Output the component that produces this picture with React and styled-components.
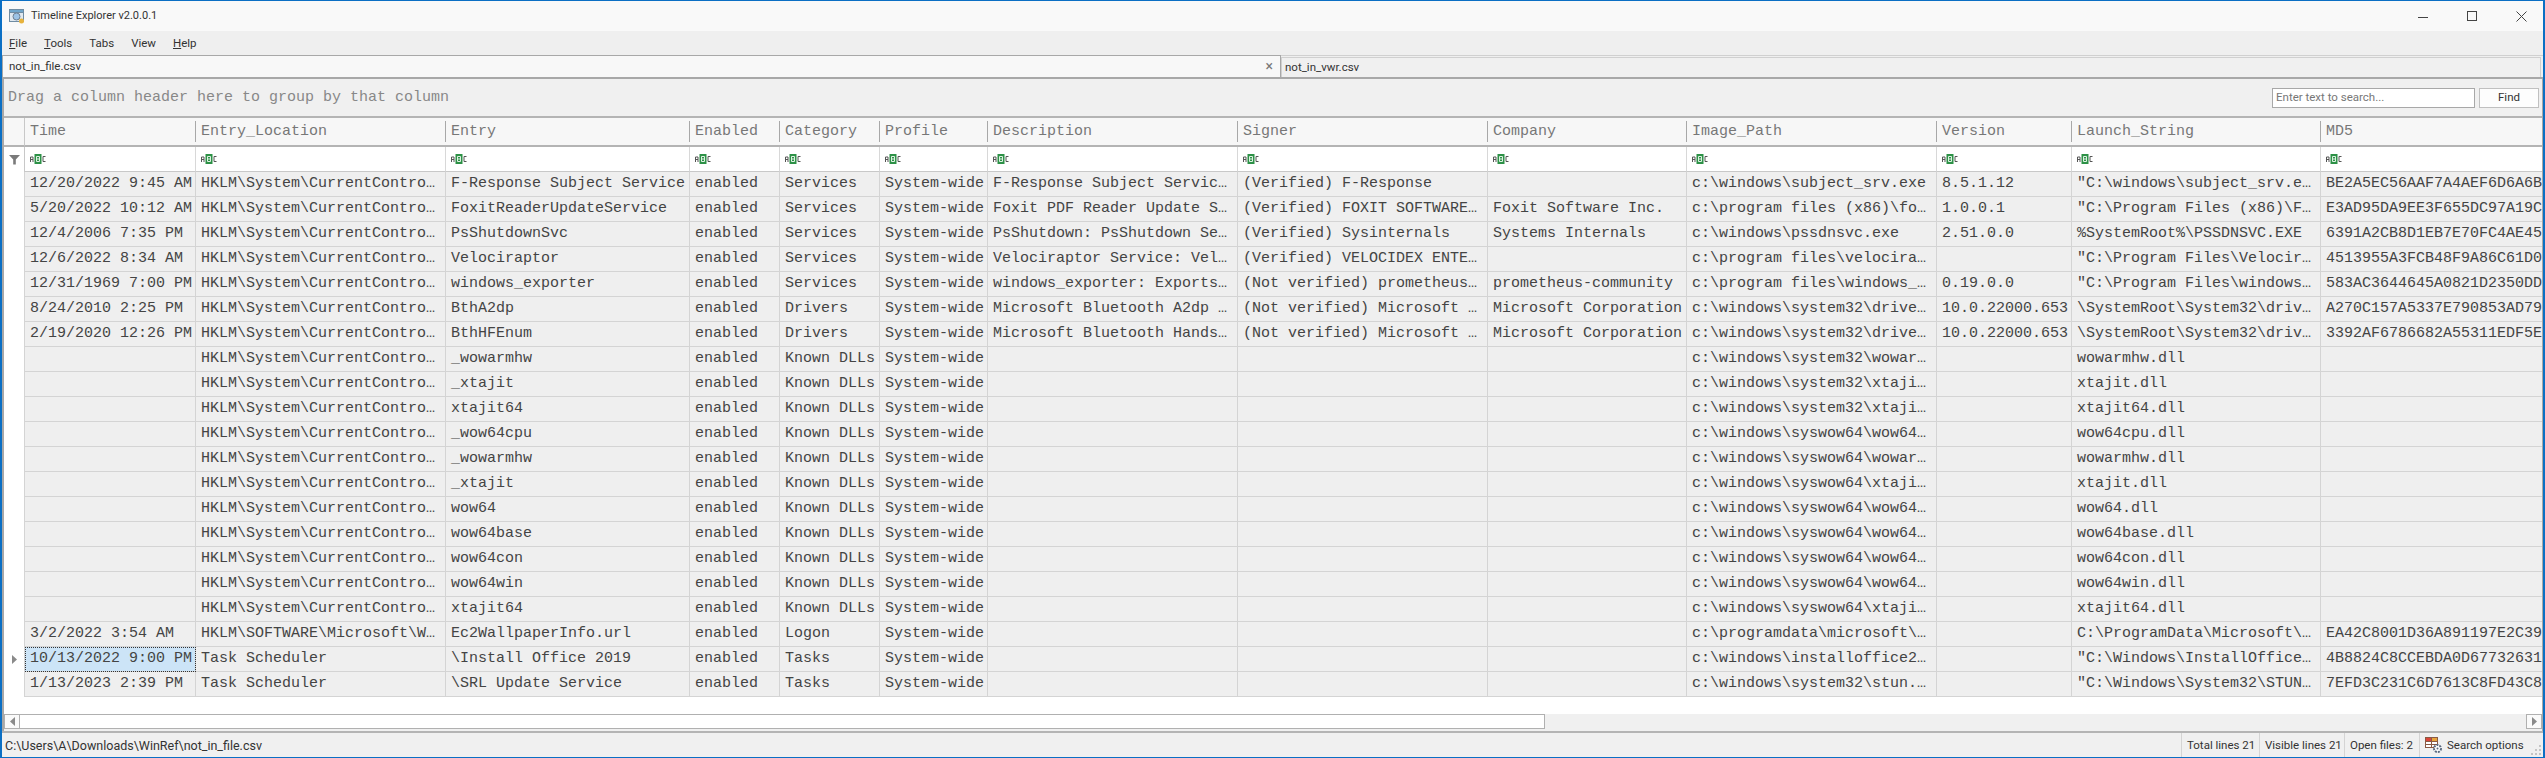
import React from "react";
import styled, { createGlobalStyle } from "styled-components";

const GlobalStyle = createGlobalStyle`
  html, body {
    margin: 0;
    padding: 0;
    background: #f0f0f0;
    overflow: hidden;
  }
  * {
    box-sizing: border-box;
  }
`;

const UI_FONT = `Roboto, "Open Sans", sans-serif`;
const MONO_FONT = `"Liberation Mono", "DejaVu Sans Mono", monospace`;

const Window = styled.div`
  width: 2545px;
  height: 758px;
  display: flex;
  flex-direction: column;
  background: #f0f0f0;
  border: 1px solid #0b6fc4;
  border-width: 1px 2px 1px 2px;
  overflow: hidden;
  font-family: ${UI_FONT};
`;

const TitleBar = styled.div`
  height: 30px;
  flex: none;
  display: flex;
  align-items: center;
  background: #f9f9f9;
  font-size: 11px;
  color: #333;
  gap: 6px;
  margin-left: -2px;
  padding-left: 9px;
`;

const TitleText = styled.div`
  flex: 1;
  transform: translateY(-1px);
`;

const WinControls = styled.div`
  display: flex;
  align-items: center;
  gap: 38px;
  padding-right: 16px;
  color: #444;
`;

const MenuBar = styled.div`
  height: 24px;
  flex: none;
  display: flex;
  align-items: center;
  gap: 17px;
  padding-left: 7px;
  background: #efefef;
  font-size: 11.5px;
  color: #333;
`;

const MenuKey = styled.span`
  text-decoration: underline;
`;

const TabStrip = styled.div`
  height: 24px;
  flex: none;
  display: flex;
  align-items: flex-end;
  border-top: 1px solid #d0d0d0;
  background: #efefef;
  border-bottom: 2px solid #a8a8a8;
`;

const Tab = styled.div`
  height: ${(p) => (p.$active ? "22px" : "20px")};
  width: ${(p) => p.$width};
  flex: ${(p) => (p.$active ? "none" : "1")};
  display: flex;
  align-items: center;
  justify-content: space-between;
  padding: ${(p) => (p.$active ? "0 7px 0 6px" : "0 3px")};
  background: ${(p) => (p.$active ? "#f8f8f8" : "#f0f0f0")};
  border: 1px solid #c8c8c8;
  border-color: ${(p) => (p.$active ? "#a8a8a8" : "#d0d0d0")};
  border-bottom: 0;
  margin-right: ${(p) => (p.$active ? "0" : "2px")};
  font-size: 11.5px;
  color: #333;
  span {
    transform: translateY(-1px);
  }
`;

const TabClose = styled.span`
  color: #777;
  font-size: 14px;
  line-height: 1;
`;

const Panel = styled.div`
  flex: 1;
  min-height: 0;
  display: flex;
  flex-direction: column;
  border-left: 2px solid #a8a8a8;
  border-right: 1px solid #a8a8a8;
`;

const GroupBar = styled.div`
  height: 39px;
  flex: none;
  display: flex;
  align-items: center;
  justify-content: space-between;
  padding: 0 3px 0 4px;
  background: #f0f0f0;
  border-bottom: 2px solid #b4b4b4;
`;

const GroupHint = styled.div`
  font-family: ${MONO_FONT};
  font-size: 15px;
  color: #888;
`;

const SearchBox = styled.div`
  display: flex;
  gap: 4px;
`;

const SearchInput = styled.div`
  width: 203px;
  height: 20px;
  border: 1px solid #a8a8a8;
  background: #fff;
  font-size: 11.5px;
  color: #777;
  padding-left: 3px;
  line-height: 17px;
`;

const FindButton = styled.div`
  width: 60px;
  height: 20px;
  border: 1px solid #c0c0c0;
  background: #fdfdfd;
  font-size: 11.5px;
  color: #333;
  text-align: center;
  line-height: 17px;
`;

const GridArea = styled.div`
  flex: 1;
  min-height: 0;
  background: #fff;
  overflow: hidden;
`;

const Row = styled.div`
  display: flex;
  height: ${(p) => p.$height};
  width: max-content;
`;

const Indicator = styled.div`
  width: 21px;
  flex: none;
  display: flex;
  align-items: center;
  justify-content: center;
  background: ${(p) => p.$bg};
  border-bottom: ${(p) => (p.$line ? `2px solid ${p.$line}` : "0")};
  border-right: ${(p) => (p.$edge ? `1px solid ${p.$edge}` : "0")};
`;

const HeaderCell = styled.div`
  width: ${(p) => p.$width}px;
  flex: none;
  display: flex;
  align-items: center;
  position: relative;
  padding-left: 5px;
  background: #f7f7f7;
  border-bottom: 2px solid #b4b4b4;
  font-family: ${MONO_FONT};
  font-size: 15px;
  color: #777;
  &::after {
    content: "";
    position: absolute;
    right: 0;
    top: 3px;
    bottom: 3px;
    width: 1px;
    background: #a8a8a8;
  }
`;

const FilterCell = styled.div`
  width: ${(p) => p.$width}px;
  flex: none;
  display: flex;
  align-items: center;
  padding-left: 5px;
  background: #fff;
  border-right: 1px solid #d8d8d8;
  border-bottom: 1px solid #c8c8c8;
`;

const Cell = styled.div`
  width: ${(p) => p.$width}px;
  flex: none;
  padding-left: 5px;
  overflow: hidden;
  white-space: pre;
  background: ${(p) => (p.$selected ? "#cce4f7" : "#efefef")};
  border-right: 1px solid #d4d4d4;
  border-bottom: 1px solid #d4d4d4;
  outline: ${(p) => (p.$selected ? "1px dotted #333" : "none")};
  outline-offset: -1px;
  font-family: ${MONO_FONT};
  font-size: 15px;
  line-height: 24px;
  color: #444;
`;

const Spacer = styled.div`
  flex: 1;
`;

const ScrollBar = styled.div`
  height: 15px;
  flex: none;
  margin: 0 0 2px;
  display: flex;
  background: #f0f0f0;
`;

const ScrollButton = styled.div`
  width: 16px;
  flex: none;
  display: flex;
  align-items: center;
  justify-content: center;
  background: #fafafa;
  border: 1px solid #b0b0b0;
`;

const ScrollThumb = styled.div`
  width: 1525px;
  flex: none;
  background: #fff;
  border: 1px solid #b0b0b0;
  border-left: 0;
`;

const StatusBar = styled.div`
  height: 26px;
  flex: none;
  display: flex;
  align-items: center;
  background: #f0f0f0;
  border-top: 2px solid #b4b4b4;
  font-size: 11.5px;
  color: #333;
  white-space: nowrap;
  position: relative;
`;

const StatusPath = styled.div`
  flex: 1;
  padding-left: 3px;
  font-size: 12.5px;
`;

const StatusItem = styled.div`
  height: 100%;
  width: ${(p) => p.$width}px;
  flex: none;
  display: flex;
  align-items: center;
  gap: 4px;
  padding-left: 5px;
  border-left: 1px solid #d4d4d4;
`;

const Grip = styled.svg`
  position: absolute;
  right: 1px;
  bottom: 1px;
`;

const columns = [
  { name: "Time", width: 171 },
  { name: "Entry_Location", width: 250 },
  { name: "Entry", width: 244 },
  { name: "Enabled", width: 90 },
  { name: "Category", width: 100 },
  { name: "Profile", width: 108 },
  { name: "Description", width: 250 },
  { name: "Signer", width: 250 },
  { name: "Company", width: 199 },
  { name: "Image_Path", width: 250 },
  { name: "Version", width: 135 },
  { name: "Launch_String", width: 249 },
  { name: "MD5", width: 260 },
];

const HKLM = "HKLM\\System\\CurrentContro…";
const SYS32 = "c:\\windows\\system32\\";
const WOW = "c:\\windows\\syswow64\\";
const MS_PUB = "(Not verified) Microsoft …";
const MS = "Microsoft Corporation";
const DRIVER_PATH = SYS32 + "drive…";
const DRIVER_LAUNCH = "\\SystemRoot\\System32\\driv…";

function dll(entry, path, launch) {
  return ["", HKLM, entry, "Known DLLs", "", "", "", path, "", launch, ""];
}

const rows = [
  ["12/20/2022 9:45 AM", HKLM, "F-Response Subject Service", "Services", "F-Response Subject Servic…", "(Verified) F-Response", "", "c:\\windows\\subject_srv.exe", "8.5.1.12", "\"C:\\windows\\subject_srv.e…", "BE2A5EC56AAF7A4AEF6D6A6B"],
  ["5/20/2022 10:12 AM", HKLM, "FoxitReaderUpdateService", "Services", "Foxit PDF Reader Update S…", "(Verified) FOXIT SOFTWARE…", "Foxit Software Inc.", "c:\\program files (x86)\\fo…", "1.0.0.1", "\"C:\\Program Files (x86)\\F…", "E3AD95DA9EE3F655DC97A19C"],
  ["12/4/2006 7:35 PM", HKLM, "PsShutdownSvc", "Services", "PsShutdown: PsShutdown Se…", "(Verified) Sysinternals", "Systems Internals", "c:\\windows\\pssdnsvc.exe", "2.51.0.0", "%SystemRoot%\\PSSDNSVC.EXE", "6391A2CB8D1EB7E70FC4AE45"],
  ["12/6/2022 8:34 AM", HKLM, "Velociraptor", "Services", "Velociraptor Service: Vel…", "(Verified) VELOCIDEX ENTE…", "", "c:\\program files\\velocira…", "", "\"C:\\Program Files\\Velocir…", "4513955A3FCB48F9A86C61D0"],
  ["12/31/1969 7:00 PM", HKLM, "windows_exporter", "Services", "windows_exporter: Exports…", "(Not verified) prometheus…", "prometheus-community", "c:\\program files\\windows_…", "0.19.0.0", "\"C:\\Program Files\\windows…", "583AC3644645A0821D2350DD"],
  ["8/24/2010 2:25 PM", HKLM, "BthA2dp", "Drivers", "Microsoft Bluetooth A2dp …", MS_PUB, MS, DRIVER_PATH, "10.0.22000.653", DRIVER_LAUNCH, "A270C157A5337E790853AD79"],
  ["2/19/2020 12:26 PM", HKLM, "BthHFEnum", "Drivers", "Microsoft Bluetooth Hands…", MS_PUB, MS, DRIVER_PATH, "10.0.22000.653", DRIVER_LAUNCH, "3392AF6786682A55311EDF5E"],
  dll("_wowarmhw", SYS32 + "wowar…", "wowarmhw.dll"),
  dll("_xtajit", SYS32 + "xtaji…", "xtajit.dll"),
  dll("xtajit64", SYS32 + "xtaji…", "xtajit64.dll"),
  dll("_wow64cpu", WOW + "wow64…", "wow64cpu.dll"),
  dll("_wowarmhw", WOW + "wowar…", "wowarmhw.dll"),
  dll("_xtajit", WOW + "xtaji…", "xtajit.dll"),
  dll("wow64", WOW + "wow64…", "wow64.dll"),
  dll("wow64base", WOW + "wow64…", "wow64base.dll"),
  dll("wow64con", WOW + "wow64…", "wow64con.dll"),
  dll("wow64win", WOW + "wow64…", "wow64win.dll"),
  dll("xtajit64", WOW + "xtaji…", "xtajit64.dll"),
  ["3/2/2022 3:54 AM", "HKLM\\SOFTWARE\\Microsoft\\W…", "Ec2WallpaperInfo.url", "Logon", "", "", "", "c:\\programdata\\microsoft\\…", "", "C:\\ProgramData\\Microsoft\\…", "EA42C8001D36A891197E2C39"],
  ["10/13/2022 9:00 PM", "Task Scheduler", "\\Install Office 2019", "Tasks", "", "", "", "c:\\windows\\installoffice2…", "", "\"C:\\Windows\\InstallOffice…", "4B8824C8CCEBDA0D67732631"],
  ["1/13/2023 2:39 PM", "Task Scheduler", "\\SRL Update Service", "Tasks", "", "", "", "c:\\windows\\system32\\stun.…", "", "\"C:\\Windows\\System32\\STUN…", "7EFD3C231C6D7613C8FD43C8"],
];

// csv rows leave out the two columns that never change
function toCells(row) {
  const [time, location, entry, category, ...rest] = row;
  return [time, location, entry, "enabled", category, "System-wide", ...rest];
}

function AppIcon() {
  return (
    <svg width="16" height="16" viewBox="0 0 16 16">
      <rect x="0.5" y="1.5" width="14" height="12" fill="#dfe8f0" stroke="#6f8ca3" />
      <rect x="0.5" y="1.5" width="14" height="3" fill="#6fa6cc" stroke="#6f8ca3" />
      <circle cx="7.5" cy="8.5" r="3.5" fill="#9cc3e6" stroke="#6d7f92" />
      <circle cx="12.5" cy="13" r="2.5" fill="#e8b33c" />
    </svg>
  );
}

function FunnelIcon() {
  return (
    <svg width="11" height="11" viewBox="0 0 11 11">
      <path d="M0 1h11L6.800 5.500V10.500H4.200V5.500Z" fill="#7a7a7a" />
    </svg>
  );
}

function AbcIcon() {
  return (
    <svg width="16" height="12" viewBox="0 0 16 12">
      <path d="M0.500 9V4h2.500v5M0.500 6.500h2.500" fill="none" stroke="#555" strokeWidth="1" />
      <rect x="4.500" y="1" width="7" height="10" fill="#2d9147" />
      <path d="M6.500 3.500h3v5h-3zM6.500 6h3" fill="none" stroke="#dff2e3" strokeWidth="1" />
      <path d="M15.500 3.500h-2.500v5h2.500" fill="none" stroke="#555" strokeWidth="1" />
    </svg>
  );
}

function SearchOptionsIcon() {
  return (
    <svg width="18" height="18" viewBox="0 0 18 18">
      <rect x="0.500" y="1.500" width="12" height="10" fill="#fff" stroke="#8a5a44" />
      <rect x="1" y="2" width="5" height="3" fill="#d9453a" />
      <rect x="7" y="2" width="5" height="3" fill="#e8a33c" />
      <path d="M0.500 5.500h12M0.500 8.500h12M6.500 2v9" stroke="#8a5a44" strokeWidth="1" fill="none" />
      <circle cx="12.500" cy="12.500" r="3.500" fill="#fff" stroke="#5a6a80" strokeWidth="2" strokeDasharray="2 1" />
      <circle cx="12.500" cy="12.500" r="1" fill="#5a6a80" />
    </svg>
  );
}

function Arrow({ left }) {
  return (
    <svg width="5" height="9" viewBox="0 0 5 9">
      <path d={left ? "M5 0V9L0 4.500Z" : "M0 0V9L5 4.500Z"} fill="#8a8a8a" />
    </svg>
  );
}

function WindowControls() {
  return (
    <WinControls>
      <svg width="11" height="11" viewBox="0 0 11 11">
        <path d="M0 6.500h10" stroke="#444" fill="none" />
      </svg>
      <svg width="11" height="11" viewBox="0 0 11 11">
        <rect x="0.500" y="0.500" width="9" height="9" stroke="#444" fill="none" />
      </svg>
      <svg width="11" height="11" viewBox="0 0 11 11">
        <path d="M0.500 0.500l10 10M10.500 0.500l-10 10" stroke="#444" fill="none" />
      </svg>
    </WinControls>
  );
}

export default function App() {
  return (
    <>
      <GlobalStyle />
      <Window>
        <TitleBar>
          <AppIcon />
          <TitleText>Timeline Explorer v2.0.0.1</TitleText>
          <WindowControls />
        </TitleBar>
        <MenuBar>
          <span><MenuKey>F</MenuKey>ile</span>
          <span><MenuKey>T</MenuKey>ools</span>
          <span>Tabs</span>
          <span>View</span>
          <span><MenuKey>H</MenuKey>elp</span>
        </MenuBar>
        <TabStrip>
          <Tab $active $width="1279px">
            <span>not_in_file.csv</span>
            <TabClose>×</TabClose>
          </Tab>
          <Tab>
            <span>not_in_vwr.csv</span>
          </Tab>
        </TabStrip>
        <Panel>
          <GroupBar>
            <GroupHint>Drag a column header here to group by that column</GroupHint>
            <SearchBox>
              <SearchInput>Enter text to search...</SearchInput>
              <FindButton>Find</FindButton>
            </SearchBox>
          </GroupBar>
          <GridArea>
            <Row $height="29px">
              <Indicator $bg="#f7f7f7" $line="#b4b4b4" $edge="#c8c8c8" />
              {columns.map((col) => (
                <HeaderCell key={col.name} $width={col.width}>{col.name}</HeaderCell>
              ))}
            </Row>
            <Row $height="25px">
              <Indicator $bg="#fff" $edge="#c8c8c8">
                <FunnelIcon />
              </Indicator>
              {columns.map((col) => (
                <FilterCell key={col.name} $width={col.width}>
                  <AbcIcon />
                </FilterCell>
              ))}
            </Row>
            {rows.map((row, i) => (
              <Row key={i} $height="25px">
                <Indicator $bg="#fff" $edge="#d4d4d4">
                  {i === 19 && <Arrow />}
                </Indicator>
                {toCells(row).map((text, c) => (
                  <Cell key={c} $width={columns[c].width} $selected={i === 19 && c === 0}>{text}</Cell>
                ))}
              </Row>
            ))}
          </GridArea>
          <ScrollBar>
            <ScrollButton>
              <Arrow left />
            </ScrollButton>
            <ScrollThumb />
            <Spacer />
            <ScrollButton>
              <Arrow />
            </ScrollButton>
          </ScrollBar>
        </Panel>
        <StatusBar>
          <StatusPath>C:\Users\A\Downloads\WinRef\not_in_file.csv</StatusPath>
          <StatusItem $width={78}>Total lines 21</StatusItem>
          <StatusItem $width={85}>Visible lines 21</StatusItem>
          <StatusItem $width={75}>Open files: 2</StatusItem>
          <StatusItem $width={124}>
            <SearchOptionsIcon />
            Search options
          </StatusItem>
          <Grip width="12" height="12" viewBox="0 0 12 12">
            <path d="M9 1h2v2H9zM5 5h2v2H5zM9 5h2v2H9zM1 9h2v2H1zM5 9h2v2H5zM9 9h2v2H9z" fill="#c4c4c4" />
          </Grip>
        </StatusBar>
      </Window>
    </>
  );
}
